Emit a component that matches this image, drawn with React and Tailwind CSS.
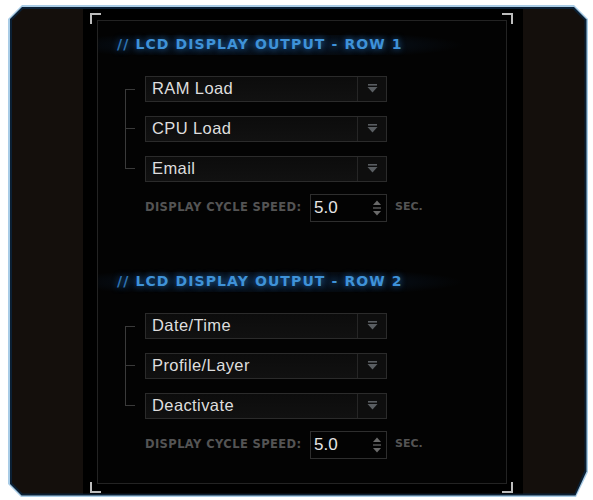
import React from "react";

const font = { fontFamily: '"Liberation Sans", Arial, sans-serif' };
const dv = { fontFamily: '"DejaVu Sans", Verdana, sans-serif' };

function Arrow() {
  return (
    <svg width="11" height="9" viewBox="0 0 11 9">
      <rect x="1" y="0" width="9" height="1.6" fill="#5a5e62" />
      <path d="M0.5 3 L10.5 3 L5.5 8.5 Z" fill="#5a5e62" />
    </svg>
  );
}

function Spinner() {
  return (
    <svg width="10" height="22" viewBox="0 0 10 22">
      <path d="M1 8 L9 8 L5 3.5 Z" fill="#6a6a6a" />
      <rect x="1" y="10.4" width="8" height="1.2" fill="#6a6a6a" />
      <path d="M1 14 L9 14 L5 18.5 Z" fill="#6a6a6a" />
    </svg>
  );
}

function Dropdown({ label }) {
  return (
    <div className="flex h-[26px] w-[242px] border border-[#2b2b2b] bg-[linear-gradient(#0c0c0c,#111111)]">
      <div
        className="flex flex-1 items-center pl-[6px] text-[16.5px] tracking-[0.4px] text-[#dedede]"
        style={font}
      >
        {label}
      </div>
      <div className="flex w-[29px] items-center justify-center border-l border-[#262626] bg-[#0e0e0e]">
        <Arrow />
      </div>
    </div>
  );
}

function Section({ title, items, first }) {
  return (
    <div className={first ? "flex flex-col pt-[14px]" : "flex flex-col pt-[50px]"}>
      <div className="flex h-[20px] items-center pl-[19px] bg-[radial-gradient(ellipse_200px_15px_at_165px_50%,rgba(30,90,160,0.3),transparent)]">
        <span
          className="whitespace-nowrap text-[14px] font-bold tracking-[1.1px] text-[#3f92d8] [text-shadow:0_0_6px_rgba(40,130,220,0.7)]"
          style={dv}
        >
          <span className="text-[#2f74b4]">//</span> LCD DISPLAY OUTPUT - {title}
        </span>
      </div>
      <div className="mt-[21px] flex pl-[27px]">
        <div className="mt-[13px] flex h-[80px] w-[10px] items-center border-y border-l border-[#3a3a3a]">
          <div className="h-px w-[10px] bg-[#3a3a3a]" />
        </div>
        <div className="ml-[10px] flex flex-col gap-[14px]">
          {items.map((it) => (
            <Dropdown key={it} label={it} />
          ))}
        </div>
      </div>
      <div className="mt-[12px] flex h-[28px] items-center pl-[47px]">
        <span
          className="w-[165px] whitespace-nowrap text-[11.5px] font-bold tracking-[0.4px] text-[#545454]"
          style={dv}
        >
          DISPLAY CYCLE SPEED:
        </span>
        <div className="flex h-[28px] border border-[#2e2e2e]">
          <div
            className="flex w-[56px] items-center pl-[3px] text-[17px] text-[#e6e6e6]"
            style={font}
          >
            5.0
          </div>
          <div className="flex w-[19px] items-center justify-center">
            <Spinner />
          </div>
        </div>
        <span
          className="ml-[8px] text-[11px] font-bold text-[#545454]"
          style={dv}
        >
          SEC.
        </span>
      </div>
    </div>
  );
}

export default function App() {
  return (
    <div className="h-[500px] w-[593px] bg-white pl-[8px] pt-[5px]">
      <div className="h-[492px] w-[580px] bg-[#a9cce6] p-[1.5px] [clip-path:polygon(14px_0,calc(100%_-_14px)_0,100%_14px,100%_calc(100%_-_25px),calc(100%_-_12px)_100%,13px_100%,0_calc(100%_-_13px),0_14px)]">
        <div className="h-full w-full bg-[#0b2035] p-[2px] [clip-path:polygon(13px_0,calc(100%_-_13px)_0,100%_13px,100%_calc(100%_-_24px),calc(100%_-_11px)_100%,12px_100%,0_calc(100%_-_12px),0_13px)]">
          <div className="flex h-full w-full bg-[#140f0c] [clip-path:polygon(12px_0,calc(100%_-_12px)_0,100%_12px,100%_calc(100%_-_23px),calc(100%_-_10px)_100%,11px_100%,0_calc(100%_-_11px),0_12px)]">
            <div className="w-[71.5px] shrink-0" />
            <div className="relative flex w-[440px] shrink-0 flex-col bg-black pb-[10px] pl-[14px] pr-[16px] pt-[11px]">
              <div className="absolute left-[7px] top-[4px] h-[11px] w-[11px] border-l-2 border-t-2 border-[#bdbdbd]" />
              <div className="absolute right-[10px] top-[4px] h-[11px] w-[11px] border-r-2 border-t-2 border-[#bdbdbd]" />
              <div className="absolute bottom-[1px] left-[7px] h-[11px] w-[11px] border-b-2 border-l-2 border-[#bdbdbd]" />
              <div className="absolute bottom-[1px] right-[10px] h-[11px] w-[11px] border-b-2 border-r-2 border-[#bdbdbd]" />
              <div className="flex-1 border border-[#232323] bg-[#030303]">
                <Section first title="ROW 1" items={["RAM Load", "CPU Load", "Email"]} />
                <Section title="ROW 2" items={["Date/Time", "Profile/Layer", "Deactivate"]} />
              </div>
            </div>
            <div className="flex-1" />
          </div>
        </div>
      </div>
    </div>
  );
}
